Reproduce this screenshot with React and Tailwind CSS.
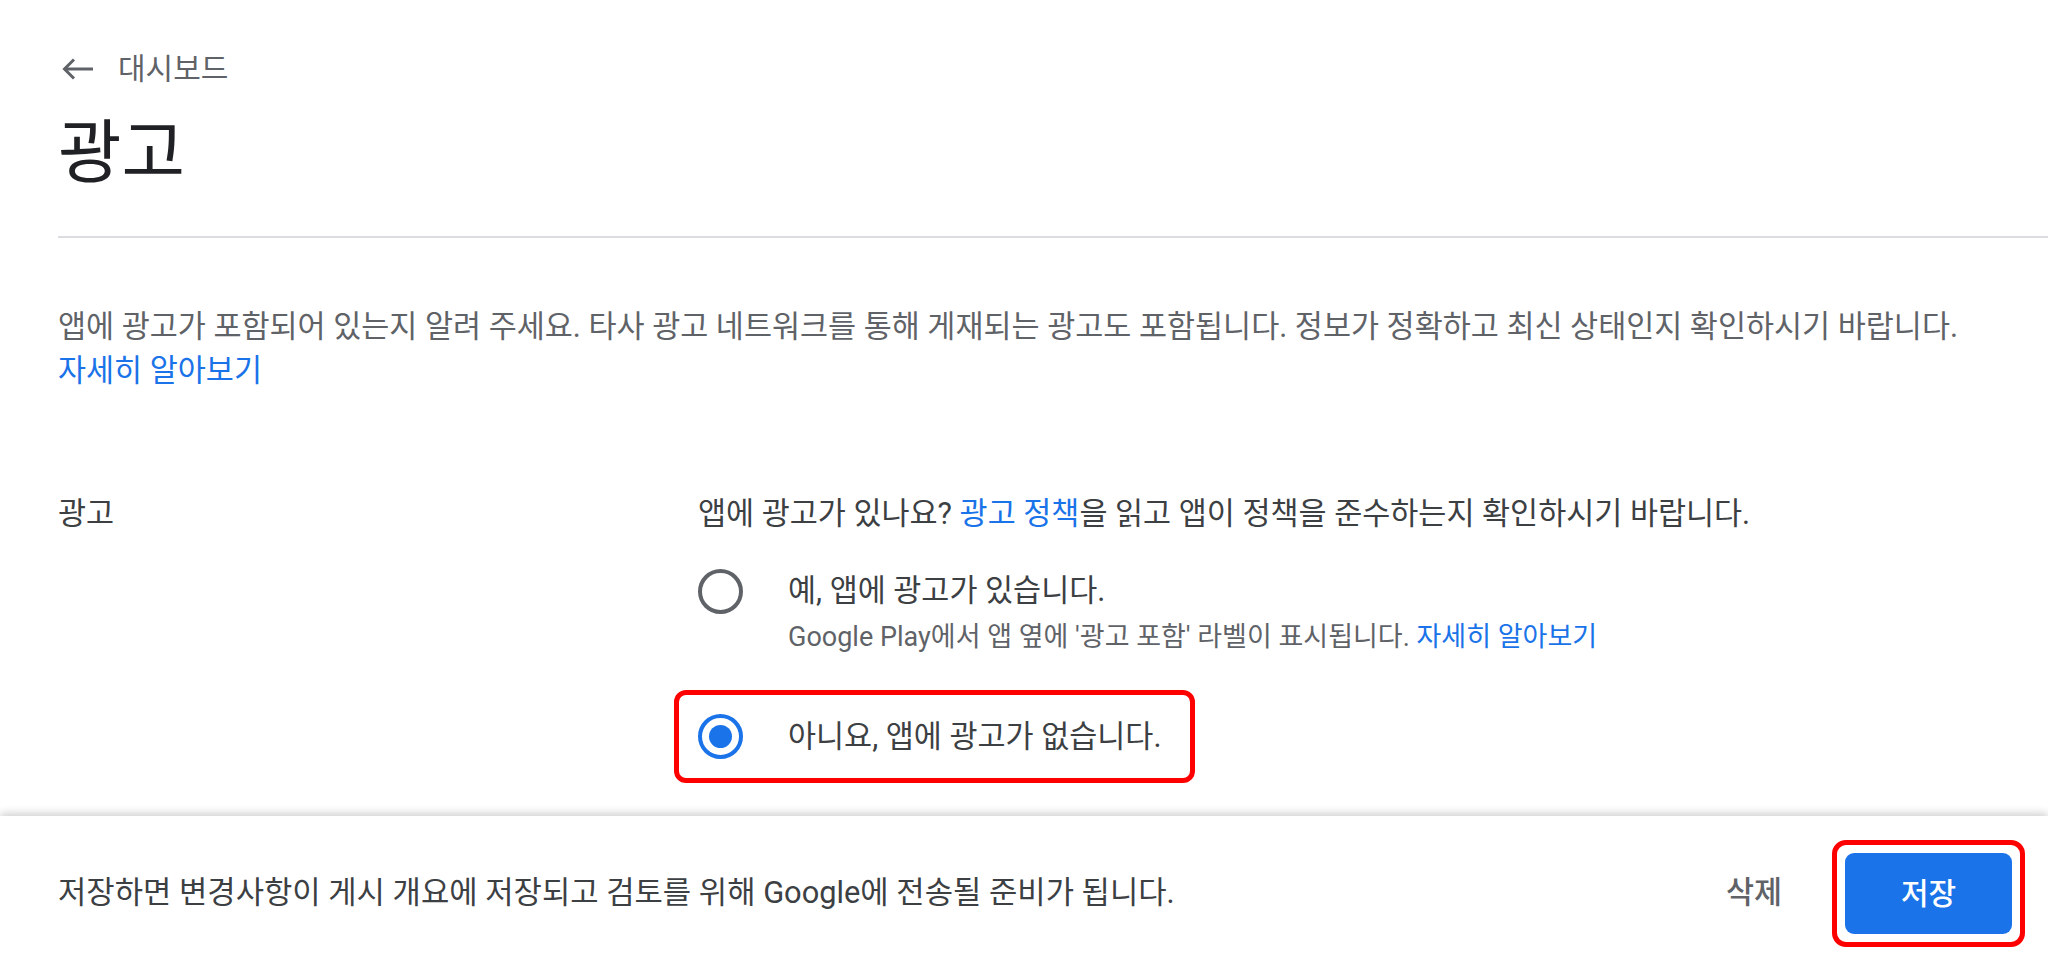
import React from "react";

function BackArrow() {
  return (
    <svg width="32" height="22" viewBox="0 0 32 22" fill="none" aria-hidden="true">
      <path d="M2 11H31" stroke="#5f6368" strokeWidth="3" />
      <path d="M12 1.5L2.5 11L12 20.5" stroke="#5f6368" strokeWidth="3" />
    </svg>
  );
}

function Radio({ checked }) {
  return checked ? (
    <div className="w-[45px] h-[45px] rounded-full border-[4px] border-[#1a73e8] flex items-center justify-center shrink-0">
      <div className="w-[23px] h-[23px] rounded-full bg-[#1a73e8]" />
    </div>
  ) : (
    <div className="w-[45px] h-[45px] rounded-full border-[4px] border-[#5f6368] shrink-0" />
  );
}

export default function App() {
  return (
    <div
      className="h-screen w-full bg-white flex flex-col overflow-hidden"
      style={{ fontFamily: 'Roboto, "Noto Sans CJK KR", "Noto Sans", sans-serif' }}
    >
      <main className="flex-1 overflow-hidden pl-[58px] pt-[47px]">
        <div className="flex items-center h-[44px] gap-[24px] pl-[4px]">
          <BackArrow />
          <span className="text-[30px] leading-[44px] text-[#5f6368]">대시보드</span>
        </div>
        <h1 className="mt-[23px] text-[69px] leading-[80px] text-[#202124] font-normal">광고</h1>
        <div className="mt-[42px] h-[2px] bg-[#dadce0]" />

        <p className="mt-[67px] text-[30.5px] leading-[44px] text-[#5f6368] pr-[40px]">
          앱에 광고가 포함되어 있는지 알려 주세요. 타사 광고 네트워크를 통해 게재되는 광고도 포함됩니다. 정보가 정확하고 최신 상태인지 확인하시기 바랍니다.
          <br />
          <span className="text-[#1a73e8]">자세히 알아보기</span>
        </p>

        <div className="mt-[99px] grid grid-cols-[640px_1fr]">
          <div className="text-[30.5px] leading-[44px] text-[#3c4043]">광고</div>
          <div>
            <div className="text-[30.5px] leading-[44px] text-[#3c4043]">
              앱에 광고가 있나요? <span className="text-[#1a73e8]">광고 정책</span>을 읽고 앱이 정책을 준수하는지 확인하시기 바랍니다.
            </div>

            <div className="mt-[33px] flex gap-[45px]">
              <Radio checked={false} />
              <div>
                <div className="text-[30.5px] leading-[44px] text-[#3c4043]">예, 앱에 광고가 있습니다.</div>
                <div className="mt-[6px] text-[27px] leading-[36px] text-[#5f6368]">
                  Google Play에서 앱 옆에 '광고 포함' 라벨이 표시됩니다.{" "}
                  <span className="text-[#1a73e8]">자세히 알아보기</span>
                </div>
              </div>
            </div>

            <div className="mt-[35px] -ml-[24px] w-[521px] h-[93px] border-[5px] border-[#ff0000] rounded-[12px] flex items-center pl-[19px] gap-[45px]">
              <Radio checked={true} />
              <span className="text-[30.5px] leading-[44px] text-[#3c4043]">아니요, 앱에 광고가 없습니다.</span>
            </div>
          </div>
        </div>
      </main>

      <footer className="h-[154px] shrink-0 bg-white shadow-[0_-3px_8px_rgba(0,0,0,0.18)] flex items-center justify-between pl-[58px] pr-[23px] relative">
        <span className="text-[30.8px] leading-[44px] text-[#3c4043]">
          저장하면 변경사항이 게시 개요에 저장되고 검토를 위해 Google에 전송될 준비가 됩니다.
        </span>
        <div className="flex items-center gap-[50px]">
          <span className="text-[30.5px] leading-[44px] font-medium text-[#5f6368]">삭제</span>
          <div className="border-[5px] border-[#ff0000] rounded-[14px] p-[8px]">
            <div className="w-[167px] h-[81px] rounded-[9px] bg-[#1a73e8] flex items-center justify-center">
              <span className="text-[30px] font-medium text-white">저장</span>
            </div>
          </div>
        </div>
      </footer>
    </div>
  );
}
